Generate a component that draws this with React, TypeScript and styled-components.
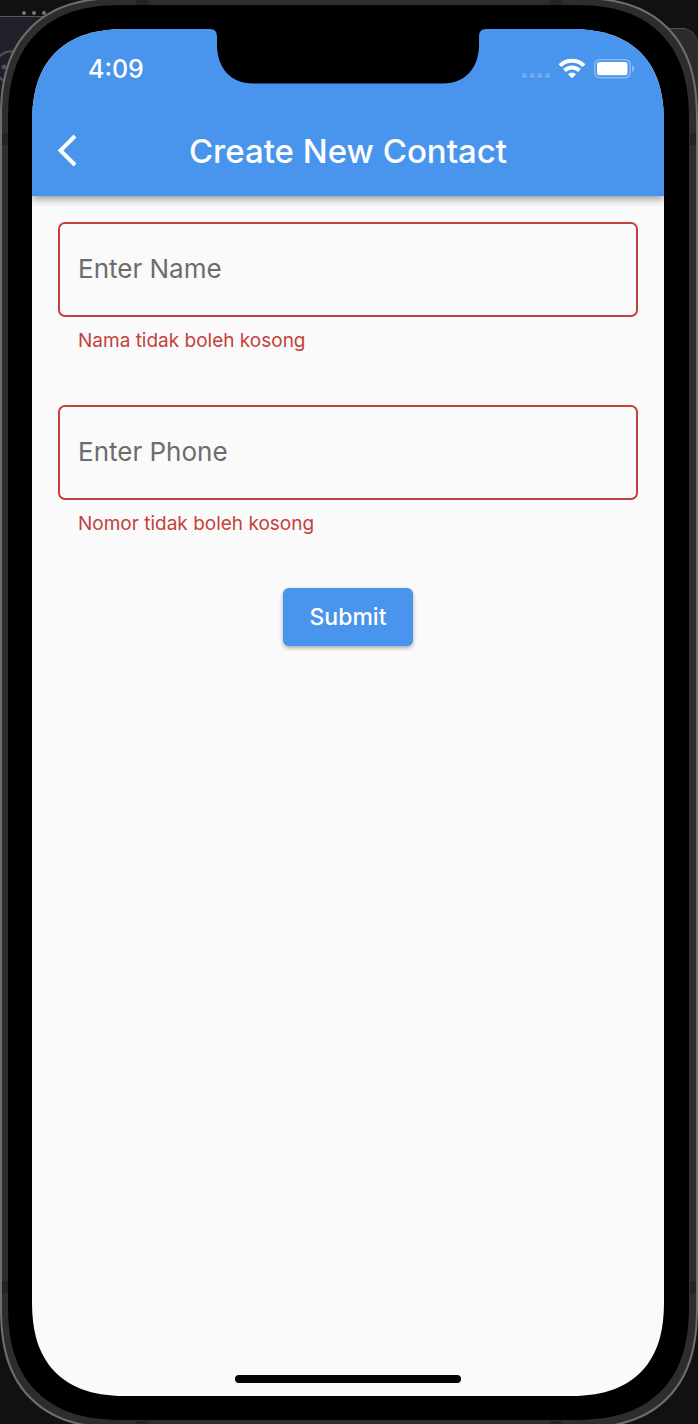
import React, { useId } from "react";
import styled, { createGlobalStyle } from "styled-components";

const blue = "#4994ec";
const red = "#c5413c";
const paper = "#fafafa";

const GlobalStyle = createGlobalStyle`
  * { box-sizing: border-box; }
  body {
    margin: 0;
    background: #111;
    font-family: Inter, "Liberation Sans", sans-serif;
  }
`;

const Desktop = styled.div`
  position: relative;
  display: flex;
  min-height: 100vh;
  overflow: hidden;
  background: #111;
`;

const EditorWindow = styled.div`
  position: absolute;
  top: 16px;
  left: 0;
  width: 100px;
  height: 124px;
  border-top: 1px solid #555;
  background: #221f2a;
`;

const PanelWindow = styled.div`
  position: absolute;
  top: 28px;
  right: 0;
  width: 60px;
  height: 1230px;
  border-top: 1px solid #555;
  border-top-right-radius: 16px;
  background: #2b2b2b;
`;

const Backdrop = styled.svg`
  position: absolute;
  top: 0;
  left: 0;
`;

const Frame = styled.div`
  position: relative;
  flex: 1;
  display: flex;
  margin: -3px 0 -5px;
  padding: 6px 7px 7px 6px;
  border: 2px solid #6e6e6e;
  border-radius: 122px;
  corner-shape: superellipse(1.3);
  background: #2d2d2d;
`;

const AntennaBand = styled.span<{ $side: "top" | "bottom" | "left" | "right"; $end?: boolean }>`
  position: absolute;
  background: #232323;
  ${({ $side, $end }) =>
    $side === "top" || $side === "bottom"
      ? `${$side}: 0; ${$end ? "right" : "left"}: 134px; width: 12px; height: 6px;`
      : `${$side}: 0; ${$end ? "bottom" : "top"}: 134px; width: 6px; height: 12px;`}
`;

const Glass = styled.div`
  position: relative;
  flex: 1;
  display: flex;
  padding: 24px 25px 24px 24px;
  border-radius: 116px;
  corner-shape: superellipse(1.3);
  background: #000;
`;

const Screen = styled.main`
  flex: 1;
  display: flex;
  flex-direction: column;
  border-radius: 96px;
  corner-shape: superellipse(1.3);
  overflow: hidden;
  background: ${paper};
`;

const AppBar = styled.header`
  position: relative;
  background: ${blue};
  color: #fff;
  box-shadow: 0 3px 8px rgba(0, 0, 0, 0.4);
`;

const StatusBar = styled.div`
  display: flex;
  align-items: center;
  justify-content: space-between;
  height: 76px;
  padding: 4px 29px 0 56px;
`;

const Clock = styled.time`
  font-size: 25px;
  line-height: 32px;
  font-weight: 500;
`;

const Notch = styled.svg`
  position: absolute;
  top: -1px;
  left: 50%;
  transform: translateX(-50%);
`;

const TitleBar = styled.div`
  display: grid;
  grid-template-columns: 72px 1fr 72px;
  align-items: center;
  height: 91px;
`;

const BackButton = styled.button`
  display: flex;
  align-items: center;
  height: 72px;
  padding: 0 0 0 24px;
  border: 0;
  background: none;
  color: inherit;
  cursor: pointer;
`;

const Title = styled.h1`
  margin: 0;
  text-align: center;
  font-size: 33px;
  line-height: 40px;
  font-weight: 500;
  white-space: nowrap;
`;

const Form = styled.form`
  flex: 1;
  display: flex;
  flex-direction: column;
  padding: 26px;
`;

const Field = styled.div`
  display: flex;
  flex-direction: column;
  gap: 8px;
  margin-bottom: 48px;
`;

const TextInput = styled.input`
  width: 100%;
  height: 95px;
  padding: 0 18px 2px;
  border: 2px solid ${red};
  border-radius: 7px;
  outline: 0;
  background: transparent;
  color: #222;
  font: 400 26px Inter, "Liberation Sans", sans-serif;

  &::placeholder {
    color: #6c6c6c;
    opacity: 1;
  }
`;

const ErrorText = styled.p`
  margin: 0;
  padding: 0 20px;
  color: ${red};
  font-size: 19px;
  line-height: 32px;
`;

const SubmitButton = styled.button`
  align-self: center;
  height: 58px;
  padding: 0 27px;
  border: 0;
  border-radius: 6px;
  background: ${blue};
  color: #fff;
  font: 500 23px Inter, "Liberation Sans", sans-serif;
  box-shadow: 0 2px 4px rgba(0, 0, 0, 0.32);
  cursor: pointer;
`;

const HomeIndicator = styled.div`
  align-self: center;
  width: 226px;
  height: 8px;
  margin-bottom: 13px;
  border-radius: 4px;
  background: #000;
`;

function StatusIcons() {
  return (
    <svg width="114" height="24" viewBox="0 0 114 24" fill="none" aria-hidden="true">
      <g fill="#fff" opacity="0.2">
        <rect x="1" y="16" width="5" height="5" rx="1.5" />
        <rect x="8.7" y="16" width="5" height="5" rx="1.5" />
        <rect x="16.3" y="16" width="5" height="5" rx="1.5" />
        <rect x="24" y="16" width="5" height="5" rx="1.5" />
      </g>
      <g stroke="#fff" strokeWidth="4">
        <path d="M39 8.600a17.200 17.200 0 0 1 24 0" />
        <path d="M43.500 13.500a10.600 10.600 0 0 1 15 0" />
      </g>
      <path d="M51 21.200l-4-4a5.700 5.700 0 0 1 8 0z" fill="#fff" />
      <rect x="73.700" y="2.700" width="35.400" height="18" rx="5" stroke="#fff" strokeOpacity="0.35" strokeWidth="1.6" />
      <rect x="76" y="5" width="30.500" height="13.300" rx="2.500" fill="#fff" />
      <path d="M111.200 8.600c2.600 1 2.600 5.200 0 6.200z" fill="#fff" fillOpacity="0.45" />
    </svg>
  );
}

function FormField({ label, error }: { label: string; error: string }) {
  const id = useId();
  return (
    <Field>
      <TextInput
        id={id}
        aria-label={label}
        placeholder={label}
        aria-invalid="true"
        aria-describedby={`${id}-error`}
      />
      <ErrorText id={`${id}-error`}>{error}</ErrorText>
    </Field>
  );
}

export default function App() {
  return (
    <>
      <GlobalStyle />
      <Desktop>
        <EditorWindow />
        <PanelWindow />
        <Backdrop width="60" height="100" fill="none" aria-hidden="true">
          <g fill="#777">
            <circle cx="24" cy="13" r="2" />
            <circle cx="34" cy="13" r="2" />
            <circle cx="44" cy="13" r="2" />
          </g>
          <circle cx="11" cy="67" r="15.5" stroke="#55525c" strokeWidth="2" />
          <circle cx="4" cy="67" r="2.4" fill="#55525c" />
        </Backdrop>
        <Frame>
          <AntennaBand $side="top" />
          <AntennaBand $side="top" $end />
          <AntennaBand $side="left" />
          <AntennaBand $side="left" $end />
          <AntennaBand $side="right" />
          <AntennaBand $side="right" $end />
          <AntennaBand $side="bottom" />
          <AntennaBand $side="bottom" $end />
          <Glass>
            <Screen>
              <AppBar>
                <StatusBar>
                  <Clock>4:09</Clock>
                  <StatusIcons />
                </StatusBar>
                <Notch width="276" height="56" viewBox="0 0 276 56" aria-hidden="true">
                  <path
                    d="M0 0V1C5 1 7 4 7 9V17C7 40 21 55.500 43 55.500H233C255 55.500 269 40 269 17V9C269 4 271 1 276 1V0Z"
                    fill="#000"
                  />
                </Notch>
                <TitleBar>
                  <BackButton type="button" aria-label="Back">
                    <svg width="22" height="34" viewBox="0 0 22 34" fill="none" aria-hidden="true">
                      <path d="M19 2L4.500 16.500L19 31" stroke="#fff" strokeWidth="4" />
                    </svg>
                  </BackButton>
                  <Title>Create New Contact</Title>
                </TitleBar>
              </AppBar>
              <Form noValidate onSubmit={(event) => event.preventDefault()}>
                <FormField label="Enter Name" error="Nama tidak boleh kosong" />
                <FormField label="Enter Phone" error="Nomor tidak boleh kosong" />
                <SubmitButton type="submit">Submit</SubmitButton>
              </Form>
              <HomeIndicator />
            </Screen>
          </Glass>
        </Frame>
      </Desktop>
    </>
  );
}
